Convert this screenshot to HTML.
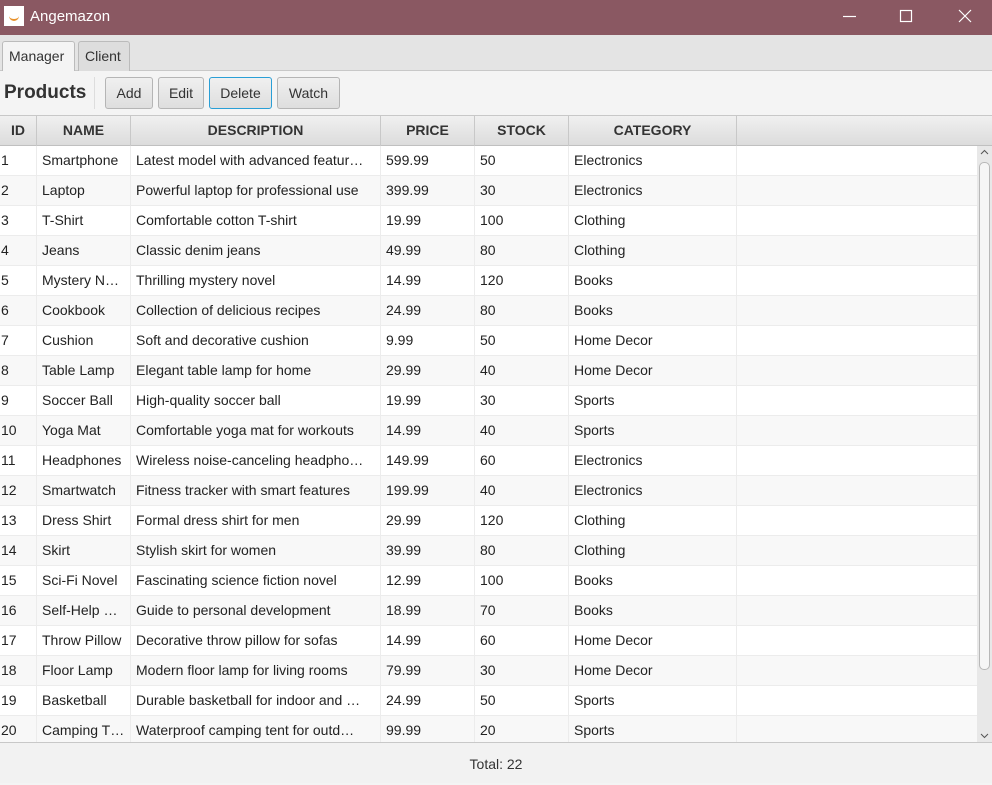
<!DOCTYPE html><html><head><style>
*{margin:0;padding:0;box-sizing:border-box}
body{width:992px;height:783px;overflow:hidden;background:#f4f4f4;font-family:"Liberation Sans",sans-serif;position:relative;color:#333}
.title{position:absolute;left:0;top:0;width:992px;height:35px;background:#8a5862;color:#fff;font-size:15px}
.title .t{position:absolute;left:30px;top:8px}
.logo{position:absolute;left:4px;top:6px;width:20px;height:20px;background:#fff}
.logo:after{content:"";position:absolute;left:5px;top:9px;width:10px;height:4px;border-bottom:2px solid #e8912a;border-radius:0 0 8px 8px}
.tabs{position:absolute;top:35px;left:0;width:992px;height:36px;background:#e4e4e4;border-bottom:1px solid #c8c8c8}
.tab{position:absolute;top:6px;height:30px;border:1px solid #bbb;border-bottom:none;border-radius:3px 3px 0 0;background:#ddd;font-size:14px;padding:6px 6px;color:#333}
.tool{position:absolute;top:71px;left:0;width:992px;height:44px;background:#f4f4f4}
.btn{position:absolute;top:6px;height:32px;border:1px solid #b5b5b5;border-radius:3px;background:linear-gradient(#f0f0f0,#dedede);font-size:14px;text-align:center;line-height:30px}
.hdr{position:absolute;top:115px;left:0;width:992px;height:31px;background:linear-gradient(#f0f0f0,#dcdcdc);border-top:1px solid #c8c8c8;border-bottom:1px solid #c0c0c0}
.hc{position:absolute;top:0;height:30px;border-right:1px solid #c8c8c8;font-weight:bold;font-size:14px;text-align:center;line-height:29px;color:#333}
.rows{position:absolute;top:146px;left:0;width:977px;height:596px;overflow:hidden;background:#fff}
.r{height:30px;position:relative;border-bottom:1px solid #ececec;font-size:14px}
.r:nth-child(even){background:#f8f8f8}
.r span{position:absolute;top:0;height:30px;line-height:28px;padding-left:5px;border-right:1px solid #ececec;white-space:nowrap;overflow:hidden;color:#222}
.sb{position:absolute;left:977px;top:146px;width:15px;height:596px;background:#e8e8e8}
.thumb{position:absolute;left:2px;top:16px;width:11px;height:508px;border:1px solid #b8b8b8;border-radius:5px;background:#f6f6f6}
.foot{position:absolute;top:742px;left:0;width:992px;height:41px;background:#f2f2f2;border-top:1px solid #c8c8c8;text-align:center;font-size:14px;line-height:42px;color:#333}
</style></head><body>
<div class="title"><div class="logo"></div><span class="t">Angemazon</span>
<svg style="position:absolute;left:0;top:0" width="992" height="35"><g stroke="#fff" stroke-width="1.2" fill="none"><path d="M843 16.5H856"/><rect x="900.5" y="10.5" width="11" height="11"/><path d="M959 10L971 22M971 10L959 22"/></g></svg></div>
<div class="tabs"><div class="tab" style="left:2px;width:73px;background:#f4f4f4;height:31px">Manager</div><div class="tab" style="left:78px;width:52px">Client</div></div>
<div class="tool">
<div style="position:absolute;left:4px;top:11px;font-weight:bold;font-size:19px;color:#333">Products</div>
<div style="position:absolute;left:94px;top:6px;width:1px;height:32px;background:#ddd"></div>
<div class="btn" style="left:105px;width:48px">Add</div>
<div class="btn" style="left:158px;width:46px">Edit</div>
<div class="btn" style="left:209px;width:63px;border:1.5px solid #2a9fd6">Delete</div>
<div class="btn" style="left:277px;width:63px">Watch</div>
</div>
<div class="hdr">
<div class="hc" style="left:0;width:37px">ID</div>
<div class="hc" style="left:37px;width:94px">NAME</div>
<div class="hc" style="left:131px;width:250px">DESCRIPTION</div>
<div class="hc" style="left:381px;width:94px">PRICE</div>
<div class="hc" style="left:475px;width:94px">STOCK</div>
<div class="hc" style="left:569px;width:168px">CATEGORY</div>
</div>
<div class="rows" id="rows"></div>
<div class="sb"><svg width="15" height="596" style="position:absolute;left:0;top:0"><g stroke="#555" fill="none"><path d="M4 8L7.5 4.5L11 8"/><path d="M4 588L7.5 591.5L11 588"/></g></svg><div class="thumb"></div></div>
<div class="foot">Total: 22</div>
<script>
var d=[["Smartphone","Latest model with advanced featur…","599.99","50","Electronics"],["Laptop","Powerful laptop for professional use","399.99","30","Electronics"],["T-Shirt","Comfortable cotton T-shirt","19.99","100","Clothing"],["Jeans","Classic denim jeans","49.99","80","Clothing"],["Mystery N…","Thrilling mystery novel","14.99","120","Books"],["Cookbook","Collection of delicious recipes","24.99","80","Books"],["Cushion","Soft and decorative cushion","9.99","50","Home Decor"],["Table Lamp","Elegant table lamp for home","29.99","40","Home Decor"],["Soccer Ball","High-quality soccer ball","19.99","30","Sports"],["Yoga Mat","Comfortable yoga mat for workouts","14.99","40","Sports"],["Headphones","Wireless noise-canceling headpho…","149.99","60","Electronics"],["Smartwatch","Fitness tracker with smart features","199.99","40","Electronics"],["Dress Shirt","Formal dress shirt for men","29.99","120","Clothing"],["Skirt","Stylish skirt for women","39.99","80","Clothing"],["Sci-Fi Novel","Fascinating science fiction novel","12.99","100","Books"],["Self-Help …","Guide to personal development","18.99","70","Books"],["Throw Pillow","Decorative throw pillow for sofas","14.99","60","Home Decor"],["Floor Lamp","Modern floor lamp for living rooms","79.99","30","Home Decor"],["Basketball","Durable basketball for indoor and …","24.99","50","Sports"],["Camping T…","Waterproof camping tent for outd…","99.99","20","Sports"]];
var c=[[0,37],[37,94],[131,250],[381,94],[475,94],[569,168]],h="";
d.forEach(function(r,i){var v=[i+1].concat(r);h+='<div class="r">';v.forEach(function(x,j){h+='<span style="left:'+c[j][0]+'px;width:'+c[j][1]+'px;'+(j==0?'padding-left:1px':'')+'">'+x+'</span>'});h+='</div>'});
document.getElementById('rows').innerHTML=h;
</script>
</body></html>
